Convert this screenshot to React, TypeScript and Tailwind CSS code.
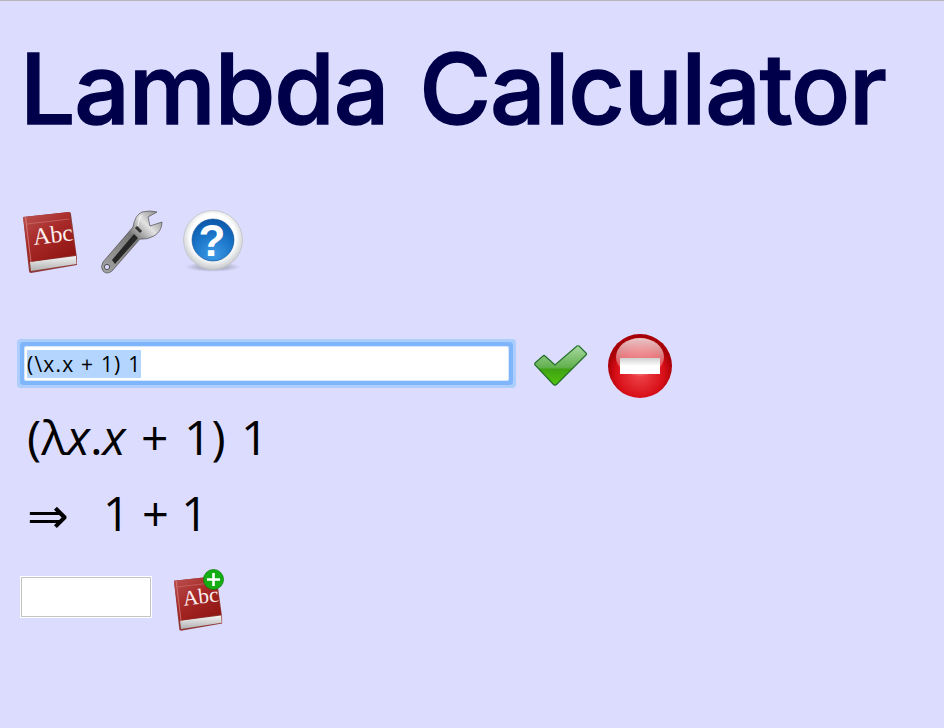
import { useEffect, useRef } from 'react';

function Book({ id, className }: { id: string; className?: string }) {
  return (
    <svg viewBox="0 0 56 62" className={className}>
      <defs>
        <linearGradient id={`${id}-cover`} x1="0.1" y1="0" x2="0.8" y2="1">
          <stop offset="0" stopColor="#b9504f" />
          <stop offset="0.45" stopColor="#a82a28" />
          <stop offset="1" stopColor="#8f1412" />
        </linearGradient>
        <linearGradient id={`${id}-pages`} x1="0" y1="0" x2="0" y2="1">
          <stop offset="0" stopColor="#f4f4f4" />
          <stop offset="1" stopColor="#b0b0b0" />
        </linearGradient>
      </defs>
      <path d="M1 6 L47 1 Q49 1 49 3 L55 47 L55 54 L9 62 Q7 62 7 60 Z" fill="#8f3a38" />
      <path d="M8 51 L54 45 L54.5 53 L9 60 Z" fill={`url(#${id}-pages)`} />
      <path d="M1 6 L47 1 L54 44 L7 51 Z" fill={`url(#${id}-cover)`} />
      <path d="M3.5 6 L9 51" stroke="#d98886" strokeWidth="0.8" fill="none" />
      <path d="M5 13 L47 8" stroke="#cf7b79" strokeWidth="0.6" fill="none" />
      <text
        x="12"
        y="34"
        transform="rotate(-7 12 34)"
        fill="#fbeeee"
        fontSize="24"
        fontFamily="'Liberation Serif', serif"
      >
        Abc
      </text>
    </svg>
  );
}

function Wrench() {
  return (
    <svg viewBox="0 0 64 66" className="w-16 h-[66px]">
      <defs>
        <linearGradient id="wrench-metal" x1="0" y1="1" x2="1" y2="0">
          <stop offset="0" stopColor="#a5a5a5" />
          <stop offset="0.55" stopColor="#777" />
          <stop offset="0.76" stopColor="#e2e2e2" />
          <stop offset="1" stopColor="#7c7c7c" />
        </linearGradient>
      </defs>
      <path
        d="M3 53 L33 18 Q35 6 42 3 Q50 1 57 3 L48 8 L50 17 L62 13 Q62 22 54 27 Q47 31 40 30 L12 62 Q7 66 3 62 Q0 58 3 53 Z"
        fill="url(#wrench-metal)"
        stroke="#4f4f4f"
        strokeWidth="0.7"
      />
      <circle cx="7" cy="58" r="2.6" fill="#dcdcff" stroke="#333" strokeWidth="0.8" />
      <path d="M12 51 L34 25 L38 29 L15 55 Z" fill="#262626" />
      <path d="M36 18 L41 23" stroke="#333" strokeWidth="3" />
      <path d="M42 6 Q38 12 38 17" stroke="#fff" strokeWidth="1.2" fill="none" opacity="0.7" />
    </svg>
  );
}

function Help() {
  return (
    <svg viewBox="0 0 62 64" className="w-[62px] h-16">
      <defs>
        <radialGradient id="help-ring" cx="0.5" cy="0.45" r="0.55">
          <stop offset="0.7" stopColor="#ffffff" />
          <stop offset="1" stopColor="#c5c8cc" />
        </radialGradient>
        <radialGradient id="help-blue" cx="0.5" cy="0.85" r="0.8">
          <stop offset="0" stopColor="#3d9be6" />
          <stop offset="0.6" stopColor="#1a74c8" />
          <stop offset="1" stopColor="#0e5bac" />
        </radialGradient>
        <radialGradient id="help-shadow" cx="0.5" cy="0.5" r="0.5">
          <stop offset="0" stopColor="#555" stopOpacity="0.6" />
          <stop offset="1" stopColor="#555" stopOpacity="0" />
        </radialGradient>
      </defs>
      <ellipse cx="31" cy="57" rx="28" ry="5" fill="url(#help-shadow)" />
      <circle cx="31" cy="30" r="29.5" fill="url(#help-ring)" stroke="#c2c4c8" strokeWidth="0.8" />
      <circle cx="31" cy="30" r="21" fill="url(#help-blue)" stroke="#0d4f96" strokeWidth="0.6" />
      <text
        x="30"
        y="46"
        textAnchor="middle"
        fill="#fff"
        fontSize="44"
        fontWeight="700"
        fontFamily="'Liberation Sans', sans-serif"
      >
        ?
      </text>
    </svg>
  );
}

function Check() {
  return (
    <svg viewBox="0 0 54 42" className="w-[54px] h-[42px]">
      <defs>
        <linearGradient id="check-fill" x1="0" y1="0" x2="0" y2="1">
          <stop offset="0" stopColor="#a9d8a0" />
          <stop offset="0.55" stopColor="#62b04f" />
          <stop offset="0.6" stopColor="#3fa313" />
          <stop offset="1" stopColor="#52c20e" />
        </linearGradient>
      </defs>
      <path
        d="M1 18 L9 11 Q10 10 11 11 L21 20 L43 1 Q44 0.5 45 1 L52 8 Q53 9 52 10 L23 39 Q21 41 19 39 L1 20 Q0.5 19 1 18 Z"
        fill="url(#check-fill)"
        stroke="#23702a"
        strokeWidth="1.2"
      />
    </svg>
  );
}

function Stop() {
  return (
    <svg viewBox="0 0 64 64" className="w-16 h-16">
      <defs>
        <radialGradient id="stop-fill" cx="0.5" cy="0.62" r="0.52">
          <stop offset="0" stopColor="#f0474d" />
          <stop offset="0.72" stopColor="#d80f18" />
          <stop offset="1" stopColor="#a80006" />
        </radialGradient>
        <linearGradient id="stop-gloss" x1="0" y1="0" x2="0" y2="1">
          <stop offset="0" stopColor="#fff" stopOpacity="0.78" />
          <stop offset="1" stopColor="#fff" stopOpacity="0.1" />
        </linearGradient>
        <linearGradient id="stop-bar" x1="0" y1="0" x2="0" y2="1">
          <stop offset="0" stopColor="#d0d0d0" />
          <stop offset="0.5" stopColor="#fff" />
          <stop offset="1" stopColor="#fff" />
        </linearGradient>
      </defs>
      <circle cx="32" cy="32" r="32" fill="url(#stop-fill)" />
      <ellipse cx="32" cy="23" rx="24" ry="19" fill="url(#stop-gloss)" />
      <rect x="12" y="24" width="40" height="16" fill="url(#stop-bar)" />
    </svg>
  );
}

export default function App() {
  const inputRef = useRef<HTMLInputElement>(null);

  useEffect(() => {
    inputRef.current?.focus();
    inputRef.current?.select();
  }, []);

  return (
    <div className="h-[728px] overflow-hidden bg-[#dcdcff] border-t border-[#b5b5b5] font-['Open_Sans',sans-serif] text-black">
      <h1 className="pl-5 pt-[29px] text-[#00004a] text-[98px] leading-[118px] font-medium font-['Inter',sans-serif] tracking-[-1.1px] [-webkit-text-stroke:1.5px_#00004a] [word-spacing:6px] whitespace-nowrap">
        Lambda Calculator
      </h1>

      {/* Toolbar */}
      <div className="flex items-center pl-[22px] pt-[61px]">
        <Book id="dict" className="w-14 h-[62px]" />
        <div className="ml-[22px]">
          <Wrench />
        </div>
        <div className="ml-[18px]">
          <Help />
        </div>
      </div>

      {/* Expression input */}
      <div className="flex items-center pl-[25px] pt-[59px]">
        <input
          ref={inputRef}
          defaultValue="(\x.x + 1) 1"
          className="w-[483px] h-[33px] mb-[5px] pl-[2px] pr-px bg-white text-[21px] tracking-[1.2px] text-black rounded-[1px] shadow-[0_0_0_1px_#d5e7fe,0_0_0_5px_#7fb5fa,0_0_0_8px_#abcefb] outline-none selection:bg-[#b4d5fe]"
        />
        <div className="ml-[26px]">
          <Check />
        </div>
        <div className="ml-[20px]">
          <Stop />
        </div>
      </div>

      {/* Reduction steps */}
      <div className="pl-[27px] pt-[7px] text-[48px] leading-[64px] [word-spacing:3px]">
        (λ<i>x</i>.<i>x</i> + 1) 1
      </div>
      <div className="flex pl-[27px] pt-[12px] text-[47px] leading-[64px]">
        <span className="w-[76px] pt-[3px] font-['DejaVu_Sans',sans-serif] text-[50px]">⇒</span>
        <span>1 + 1</span>
      </div>

      {/* Name input */}
      <div className="flex items-start pl-[21px] pt-[27px]">
        <input className="w-[130px] h-10 mt-[2px] bg-white border border-[#c4c4c4] ring-1 ring-white outline-none" />
        <div className="relative ml-[22px]">
          <Book id="dict-add" className="w-[50px] h-[56px]" />
          <svg viewBox="0 0 21 21" className="absolute -top-[6px] -right-px w-[21px] h-[21px]">
            <circle cx="10.5" cy="10.5" r="10" fill="#14ad14" stroke="#0d800d" strokeWidth="0.8" />
            <path d="M10.5 4 V17 M4 10.5 H17" stroke="#fff" strokeWidth="2.6" />
          </svg>
        </div>
      </div>
    </div>
  );
}
